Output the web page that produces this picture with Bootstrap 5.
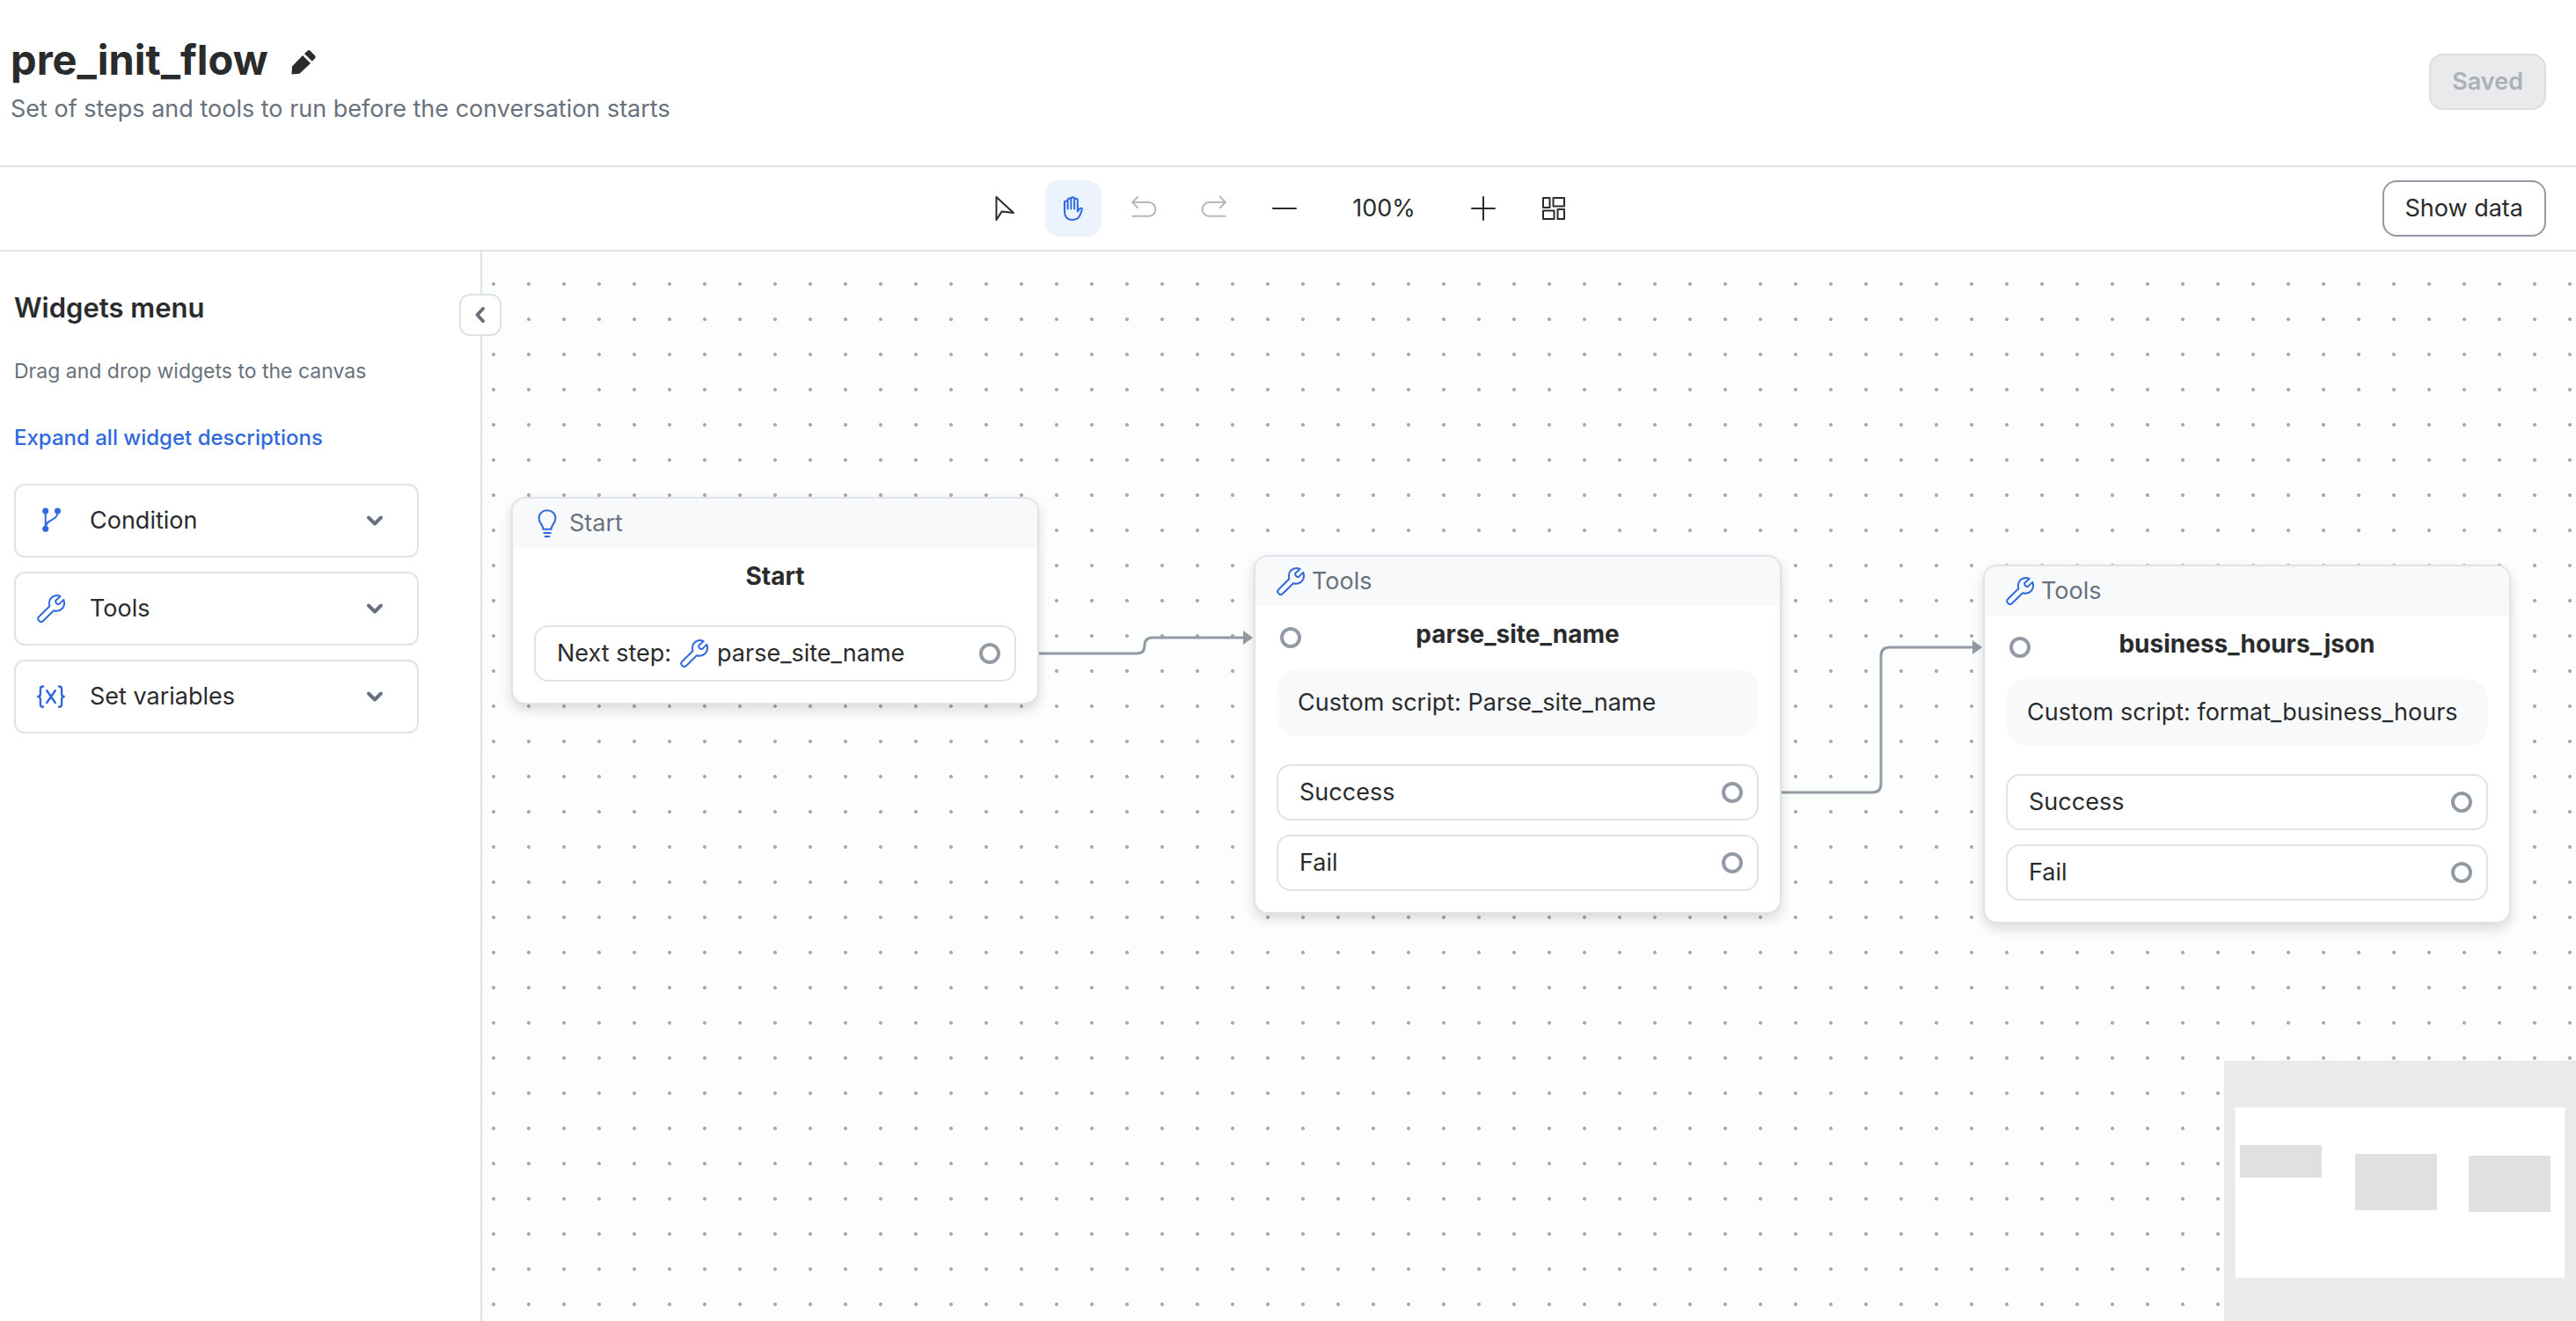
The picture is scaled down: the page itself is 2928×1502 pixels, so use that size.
<!DOCTYPE html>
<html lang="en">
<head>
<meta charset="utf-8">
<meta name="viewport" content="width=device-width, initial-scale=1">
<title>pre_init_flow</title>
<link rel="stylesheet" href="https://cdn.jsdelivr.net/npm/bootstrap@5.3.0/dist/css/bootstrap.min.css">
<style>
  :root { --ink: #2a2b2d; --muted: #69717d; --line: #dfe3e8; --blue: #2f69dd; --port: #929aa4; --soft: #f8f9fb; }
  body { font-family: Inter, "Liberation Sans", sans-serif; font-size: 27px; line-height: 40px; color: var(--ink); }
  svg { display: block; flex: none; }
  .ico { width: 32px; height: 32px; fill: none; stroke: currentColor; stroke-width: 2; stroke-linecap: round; stroke-linejoin: round; }
  .ico-blue { color: var(--blue); }

  .page-head { height: 190px; padding: 0 34px 2px 12px; border-bottom: 2px solid var(--line); }
  .flow-title { font-size: 47px; line-height: 56px; font-weight: 700; margin: 0 0 6px; }
  .flow-sub { line-height: 44px; margin: 0; color: var(--muted); }
  .bare { border: 0; background: none; padding: 0; color: inherit; }
  .act { height: 64px; padding: 0 24px; border: 2px solid var(--port); border-radius: 16px; background: #fff; color: var(--ink); font-size: 27px; line-height: 40px; }
  .act:disabled { background: #e9eaec; border-color: #dcdddf; color: #acb0b8; font-weight: 600; opacity: 1; }

  .tool-bar { height: 96px; padding: 0 34px 0 12px; border-bottom: 2px solid var(--line); }
  .tool-side { flex: 1 1 0; }
  .tool { width: 64px; height: 64px; border: 0; border-radius: 16px; background: none; color: var(--ink); }
  .tool-on { background: #ecf3fc; color: var(--blue); }
  .tool:disabled { color: #b4b8c0; }
  .zoom-level { width: 130px; }

  .side { width: 548px; padding: 44px 70px 0 16px; border-right: 2px solid var(--line); }
  .side-title { font-size: 31px; line-height: 40px; font-weight: 600; margin: 0 0 32px; }
  .side-note { font-size: 23px; color: var(--muted); margin: 0 0 36px; }
  .side-link { font-size: 24px; font-weight: 500; color: var(--blue); text-decoration: none; margin-bottom: 32px; }
  .widget { height: 84px; padding: 0 36px 0 24px; border: 2px solid var(--line); border-radius: 12px; background: #fff; color: var(--ink); gap: 28px; }
  .chev { width: 24px; height: 24px; color: var(--muted); stroke-width: 4; }
  .collapse-btn { top: 48px; right: -24px; width: 48px; height: 48px; border: 2px solid var(--line); border-radius: 12px; background: #fff; z-index: 3; }

  .flow-canvas { background: #fcfdfd radial-gradient(circle at 20px 20px, #a9acac 0 1.6px, transparent 2.4px) -7px 17px / 40px 40px; }
  .edges { fill: none; stroke: var(--port); stroke-width: 3; }
  .edges .tip { fill: var(--port); stroke: none; }
  .node { width: 600px; border: 2px solid var(--line); border-radius: 16px; background: #fff; box-shadow: 0 6px 14px rgba(0,0,0,.14); }
  .node-start { left: 33px; top: 279px; }
  .node-parse { left: 877px; top: 345px; }
  .node-hours { left: 1706px; top: 356px; }
  .node-head { height: 56px; padding: 0 24px; gap: 8px; background: var(--soft); color: var(--muted); border-radius: 14px 14px 0 0; }
  .node-name { font-size: 28px; line-height: 64px; font-weight: 700; margin: 0; }
  .node-rows { padding: 24px; gap: 16px; }
  .script-box { margin: 8px 24px; padding: 18px 24px; border-radius: 24px; background: var(--soft); }
  .step { height: 64px; padding: 0 16px 0 24px; border: 2px solid var(--line); border-radius: 16px; gap: 10px; }
  .port { width: 24px; height: 24px; border: 4px solid var(--port); border-radius: 50%; background: #fff; }
  .port-in { left: 28px; top: 24px; }

  .minimap { right: 0; bottom: 0; width: 400px; height: 296px; background: #eaeaea; }
  .minimap rect { fill: #e0e0e0; }
  .minimap .view { fill: #fff; stroke: #f0f0f0; }
</style>
</head>
<body>
<svg class="d-none" aria-hidden="true">
  <symbol id="wrench" viewBox="0 0 32 32"><path d="M26.6 1.9C22.4.2 17.300 1.300 15.100 5.300C13.700 8 13.700 10.800 14.400 13.200L2.200 25.200A3.400 3.400 0 0 0 7 30L19 18.200C22.200 19.200 26 18.600 28.600 16C31.200 13.200 31.600 9.500 30.300 5.900L25.200 10.900C23 11.400 20.700 9.300 21.200 7Z"/></symbol>
  <symbol id="down" viewBox="0 0 24 24"><path d="M5 8.500L12 15.500L19 8.500"/></symbol>
</svg>

<div class="d-flex flex-column vh-100 overflow-hidden bg-white">
  <header class="page-head d-flex align-items-center justify-content-between">
    <div>
      <div class="d-flex align-items-center gap-4">
        <h1 class="flow-title">pre_init_flow</h1>
        <button class="bare" type="button" aria-label="Rename flow">
          <svg class="ico" viewBox="0 0 32 32"><g fill="currentColor" stroke="none"><path d="M2.500 29.500L3 20.500L15 8L24 17L11.500 28.700Z"/><path d="M17 6L20.800 2.600Q22.200 1.500 23.600 2.700L29 8.200Q30.300 9.600 29 11.200L25.800 14.800Z"/></g></svg>
        </button>
      </div>
      <p class="flow-sub">Set of steps and tools to run before the conversation starts</p>
    </div>
    <button class="act" type="button" disabled>Saved</button>
  </header>

  <div class="tool-bar d-flex align-items-center" role="toolbar" aria-label="Canvas tools">
    <div class="tool-side"></div>
    <div class="d-flex align-items-center gap-3">
      <button class="tool d-flex align-items-center justify-content-center" type="button" aria-label="Select"><svg class="ico" viewBox="0 0 32 32"><path d="M8.500 3V29L14.800 19.400L28 21Z"/></svg></button>
      <button class="tool tool-on d-flex align-items-center justify-content-center" type="button" aria-label="Pan"><svg class="ico" viewBox="0 0 32 32"><path d="M9.600 16.500V9.200a1.800 1.800 0 0 0-3.600 0V19C6 25.500 9 28.900 15 28.900C18.500 28.900 21 28 22.800 25C24.200 22.600 25 20.500 25.800 17.600C26.300 15.500 23.700 15.200 22.900 16.500L20.900 19.500V6.600a1.800 1.800 0 0 0-3.700 0M9.600 9V6.400a1.900 1.900 0 0 1 3.800 0V16.500M13.400 6.500V5.100a1.900 1.900 0 0 1 3.800 0V16.500"/></svg></button>
      <button class="tool d-flex align-items-center justify-content-center" type="button" aria-label="Undo" disabled><svg class="ico" viewBox="0 0 32 32"><path d="M9.300 2.800L3 9L9.300 15.200M3 9H21.500a7.900 7.900 0 0 1 0 15.800H3.500"/></svg></button>
      <button class="tool d-flex align-items-center justify-content-center" type="button" aria-label="Redo" disabled><svg class="ico" viewBox="0 0 32 32"><path d="M22.700 2.800L29 9L22.700 15.200M29 9H10.500a7.900 7.900 0 0 0 0 15.800H28.500"/></svg></button>
      <button class="tool d-flex align-items-center justify-content-center" type="button" aria-label="Zoom out"><svg class="ico" viewBox="0 0 32 32"><path d="M3 16H29"/></svg></button>
      <span class="zoom-level text-center">100%</span>
      <button class="tool d-flex align-items-center justify-content-center" type="button" aria-label="Zoom in"><svg class="ico" viewBox="0 0 32 32"><path d="M3 16H29M16 3V29"/></svg></button>
      <button class="tool d-flex align-items-center justify-content-center" type="button" aria-label="Arrange"><svg class="ico" viewBox="0 0 32 32"><path d="M4 4H11.500V15H4ZM15.500 4H28V13.500H15.500ZM4 18.500H16.500V28H4ZM20.500 17H28V28H20.500Z"/></svg></button>
    </div>
    <div class="tool-side d-flex justify-content-end"><button class="act" type="button">Show data</button></div>
  </div>

  <div class="d-flex flex-fill overflow-hidden">
    <aside class="side position-relative flex-shrink-0 d-flex flex-column">
      <button class="collapse-btn position-absolute d-flex align-items-center justify-content-center p-0" type="button" aria-label="Collapse menu"><svg class="ico chev" viewBox="0 0 24 24"><path d="M15 5L8.500 12L15 19"/></svg></button>
      <h2 class="side-title">Widgets menu</h2>
      <p class="side-note">Drag and drop widgets to the canvas</p>
      <a class="side-link" href="#">Expand all widget descriptions</a>
      <div class="d-flex flex-column gap-3">
        <button class="widget d-flex align-items-center text-start" type="button">
          <svg class="ico ico-blue" viewBox="0 0 32 32"><g fill="currentColor" stroke="none"><circle cx="9.700" cy="5" r="3.500"/><circle cx="23.500" cy="5" r="3.500"/><circle cx="9.700" cy="25.300" r="3.500"/></g><path d="M9.700 5V25M23.500 6C23.500 17 10.500 13.500 10 23"/></svg>
          <span class="flex-fill">Condition</span><svg class="ico chev"><use href="#down"/></svg>
        </button>
        <button class="widget d-flex align-items-center text-start" type="button">
          <svg class="ico ico-blue"><use href="#wrench"/></svg>
          <span class="flex-fill">Tools</span><svg class="ico chev"><use href="#down"/></svg>
        </button>
        <button class="widget d-flex align-items-center text-start" type="button">
          <svg class="ico ico-blue" viewBox="0 0 32 32"><path stroke-width="2.400" d="M7 4.500C4.500 4.500 3.900 5.300 3.900 7.200V12.500C3.900 14.800 3 16 1.300 16C3 16 3.900 17.200 3.900 19.500V25C3.900 27 4.500 27.800 7 27.800M25 4.500C27.500 4.500 28.100 5.300 28.100 7.200V12.500C28.100 14.800 29 16 30.700 16C29 16 28.100 17.200 28.100 19.500V25C28.100 27 27.500 27.800 25 27.800M11.200 9.200L20.800 23M20.800 9.200L11.200 23"/></svg>
          <span class="flex-fill">Set variables</span><svg class="ico chev"><use href="#down"/></svg>
        </button>
      </div>
    </aside>

    <main class="flow-canvas flex-fill position-relative overflow-hidden">
      <svg class="edges position-absolute top-0 start-0 w-100 h-100" aria-hidden="true">
        <path d="M633 457H744Q753 457 753 448T762 439H868"/><path class="tip" d="M865 431L876 439L865 447Z"/>
        <path d="M1477 615H1580Q1590 615 1590 605V460Q1590 450 1600 450H1696"/><path class="tip" d="M1694 442L1705 450L1694 458Z"/>
      </svg>

      <section class="node node-start position-absolute">
        <div class="node-head d-flex align-items-center"><svg class="ico ico-blue" viewBox="0 0 32 32"><path stroke-linecap="butt" stroke-linejoin="miter" d="M10.500 22.800H19.500C19.500 17.500 24.400 16.500 24.400 10.200C24.400 4.800 20.300 1.200 15 1.200S5.600 4.800 5.600 10.200C5.600 16.500 10.500 17.500 10.500 22.800ZM10.500 27H19.500M11.800 31H18.200"/></svg>Start</div>
        <h3 class="node-name text-center">Start</h3>
        <div class="node-rows d-flex flex-column">
          <div class="step d-flex align-items-center"><span>Next step:</span><svg class="ico ico-blue"><use href="#wrench"/></svg><span>parse_site_name</span><span class="port ms-auto"></span></div>
        </div>
      </section>

      <section class="node node-parse position-absolute">
        <div class="node-head d-flex align-items-center"><svg class="ico ico-blue"><use href="#wrench"/></svg>Tools</div>
        <div class="position-relative"><span class="port port-in position-absolute"></span><h3 class="node-name text-center">parse_site_name</h3></div>
        <div class="script-box">Custom script: Parse_site_name</div>
        <div class="node-rows d-flex flex-column">
          <div class="step d-flex align-items-center justify-content-between">Success<span class="port"></span></div>
          <div class="step d-flex align-items-center justify-content-between">Fail<span class="port"></span></div>
        </div>
      </section>

      <section class="node node-hours position-absolute">
        <div class="node-head d-flex align-items-center"><svg class="ico ico-blue"><use href="#wrench"/></svg>Tools</div>
        <div class="position-relative"><span class="port port-in position-absolute"></span><h3 class="node-name text-center">business_hours_json</h3></div>
        <div class="script-box">Custom script: format_business_hours</div>
        <div class="node-rows d-flex flex-column">
          <div class="step d-flex align-items-center justify-content-between">Success<span class="port"></span></div>
          <div class="step d-flex align-items-center justify-content-between">Fail<span class="port"></span></div>
        </div>
      </section>

      <svg class="minimap position-absolute" viewBox="0 0 400 296" role="img" aria-label="Minimap">
        <rect class="view" x="12.500" y="53" width="375" height="194"/>
        <rect x="18" y="96" width="93" height="37" rx="1"/>
        <rect x="149" y="106" width="93" height="64" rx="1"/>
        <rect x="278" y="108" width="93" height="64" rx="1"/>
      </svg>
    </main>
  </div>
</div>
<script src="https://cdn.jsdelivr.net/npm/bootstrap@5.3.0/dist/js/bootstrap.bundle.min.js"></script>
</body>
</html>
